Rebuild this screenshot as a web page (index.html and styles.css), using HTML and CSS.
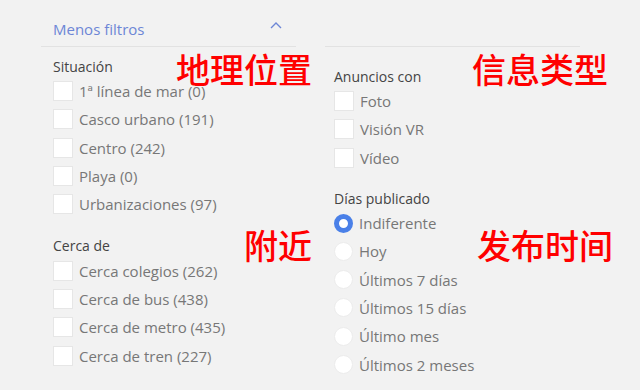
FILE: index.html
```html
<!DOCTYPE html>
<html lang="es">
<head>
    <meta charset="UTF-8">
    <meta name="viewport" content="width=device-width, initial-scale=1.0">
    <title>Filtros</title>
    <link rel="stylesheet" href="styles.css">
</head>
<body>
    <div class="filters">
        <!-- Left column -->
        <div class="column">
            <div class="column-head">
                <span class="toggle">Menos filtros</span>
                <svg class="chevron" width="12" height="7" viewBox="0 0 12 7">
                    <path d="M1 6 L6 1 L11 6" fill="none" stroke="#6d86d6" stroke-width="1.4"/>
                </svg>
            </div>
            <div class="column-body">
                <div class="group">
                    <div class="group-title">Situación</div>
                    <label class="option"><span class="box"></span>1ª línea de mar (0)</label>
                    <label class="option"><span class="box"></span>Casco urbano (191)</label>
                    <label class="option"><span class="box"></span>Centro (242)</label>
                    <label class="option"><span class="box"></span>Playa (0)</label>
                    <label class="option"><span class="box"></span>Urbanizaciones (97)</label>
                </div>
                <div class="group">
                    <div class="group-title">Cerca de</div>
                    <label class="option"><span class="box"></span>Cerca colegios (262)</label>
                    <label class="option"><span class="box"></span>Cerca de bus (438)</label>
                    <label class="option"><span class="box"></span>Cerca de metro (435)</label>
                    <label class="option"><span class="box"></span>Cerca de tren (227)</label>
                </div>
            </div>
        </div>

        <!-- Right column -->
        <div class="column">
            <div class="column-head"></div>
            <div class="column-body right">
                <div class="group">
                    <div class="group-title">Anuncios con</div>
                    <label class="option"><span class="box"></span>Foto</label>
                    <label class="option"><span class="box"></span>Visión VR</label>
                    <label class="option"><span class="box"></span>Vídeo</label>
                </div>
                <div class="group">
                    <div class="group-title">Días publicado</div>
                    <label class="option"><span class="radio checked"></span>Indiferente</label>
                    <label class="option"><span class="radio"></span>Hoy</label>
                    <label class="option"><span class="radio"></span>Últimos 7 días</label>
                    <label class="option"><span class="radio"></span>Últimos 15 días</label>
                    <label class="option"><span class="radio"></span>Último mes</label>
                    <label class="option"><span class="radio"></span>Últimos 2 meses</label>
                </div>
            </div>
        </div>

        <!-- Annotations -->
        <span class="note note-location">地理位置</span>
        <span class="note note-type">信息类型</span>
        <span class="note note-near">附近</span>
        <span class="note note-date">发布时间</span>
    </div>
</body>
</html>
```

FILE: styles.css
```css
/* General Styles */
body {
    margin: 0;
    padding: 0;
    background: #f2f2f2;
    font-family: 'Open Sans', 'Noto Sans', sans-serif;
    width: 640px;
    height: 390px;
    overflow: hidden;
}

.filters {
    position: relative;
    display: grid;
    grid-template-columns: 255px 255px;
    column-gap: 29px;
    padding-left: 41px;
    height: 390px;
}

.column-head {
    height: 34px;
    border-bottom: 1px solid #e2e2e2;
    display: flex;
    align-items: center;
    justify-content: space-between;
    padding: 12px 14px 0 12px;
}

.toggle {
    color: #6d86d6;
    font-size: 15px;
}

.chevron {
    display: block;
    margin-top: -8px;
}

.column-body {
    padding: 10px 12px 0;
}

.column-body.right {
    padding: 20px 9px 0;
}

.group + .group {
    margin-top: 18px;
}

.right .group + .group {
    margin-top: 17px;
}

.group-title {
    color: #444;
    font-size: 14px;
    line-height: 20px;
}

.option {
    display: flex;
    align-items: center;
    height: 28.3px;
    color: #777;
    font-size: 15px;
}

.box {
    width: 18px;
    height: 18px;
    background: #fff;
    border: 1px solid #e6e6e6;
    margin-right: 6px;
    flex-shrink: 0;
}

.radio {
    width: 19px;
    height: 19px;
    border-radius: 50%;
    background: #fff;
    margin-right: 6px;
    box-sizing: border-box;
    border: 1px solid #ececec;
    flex-shrink: 0;
}

.radio.checked {
    border: 5px solid #4a80e8;
}

/* Red annotations */
.note {
    position: absolute;
    color: #ff0000;
    font-family: 'Noto Sans CJK SC', sans-serif;
    font-size: 34px;
    font-weight: 500;
    line-height: 1;
}

.note-location { left: 176px; top: 52px; }
.note-type { left: 472px; top: 52px; }
.note-near { left: 244px; top: 228px; }
.note-date { left: 477px; top: 228px; }
```
